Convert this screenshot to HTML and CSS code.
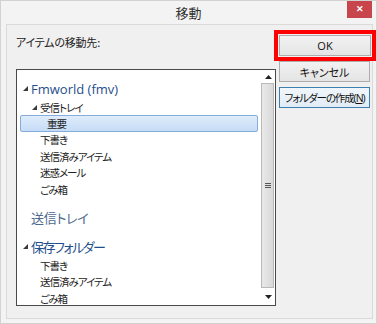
FILE: index.html
```html
<!DOCTYPE html>
<html lang="ja">
<head>
  <meta charset="UTF-8" />
  <title>移動</title>
  <link rel="stylesheet" href="styles.css">
</head>
<body>
  <div class="window">
    <div class="titlebar">
      <span class="title">移動</span>
      <button class="close">&#x2715;</button>
    </div>

    <div class="content">
      <div class="left">
        <div class="label">アイテムの移動先:</div>
        <div class="tree">
          <ul class="list">
            <li class="row big lv0"><span class="exp"><svg width="5" height="5"><polygon points="5,0 5,5 0,5" fill="#3a3a3a"/></svg></span><span class="acct">Fmworld (fmv)</span></li>
            <li class="row lv1"><span class="exp"><svg width="5" height="5"><polygon points="5,0 5,5 0,5" fill="#3a3a3a"/></svg></span>受信トレイ</li>
            <li class="row lv2 selected"><span class="exp"></span>重要</li>
            <li class="row lv1"><span class="exp"></span>下書き</li>
            <li class="row lv1"><span class="exp"></span>送信済みアイテム</li>
            <li class="row lv1"><span class="exp"></span>迷惑メール</li>
            <li class="row lv1"><span class="exp"></span>ごみ箱</li>
            <li class="row big lv0 outbox"><span class="exp"></span>送信トレイ</li>
            <li class="row big lv0 store"><span class="exp"><svg width="5" height="5"><polygon points="5,0 5,5 0,5" fill="#3a3a3a"/></svg></span>保存フォルダー</li>
            <li class="row lv1"><span class="exp"></span>下書き</li>
            <li class="row lv1"><span class="exp"></span>送信済みアイテム</li>
            <li class="row lv1"><span class="exp"></span>ごみ箱</li>
          </ul>
          <div class="scrollbar">
            <div class="arrow up"><svg width="7" height="4"><polygon points="3.5,0 7,4 0,4" fill="#222"/></svg></div>
            <div class="thumb"><svg width="6" height="5"><rect y="0" width="6" height="1" fill="#555"/><rect y="2" width="6" height="1" fill="#555"/><rect y="4" width="6" height="1" fill="#555"/></svg></div>
            <div class="arrow down"><svg width="7" height="4"><polygon points="0,0 7,0 3.5,4" fill="#222"/></svg></div>
          </div>
        </div>
      </div>

      <div class="buttons">
        <div class="btn ok">OK</div>
        <div class="btn">キャンセル</div>
        <div class="btn focus">フォルダーの作成(<u>N</u>)</div>
      </div>
    </div>
  </div>
</body>
</html>
```

FILE: styles.css
```css
* {
  box-sizing: border-box;
}

body {
  margin: 0;
  font-family: "Noto Sans CJK JP", "Open Sans", sans-serif;
  font-feature-settings: "palt";
  color: #1e1e1e;
}

.window {
  width: 377px;
  height: 324px;
  border: 1px solid #d2d2d2;
  background: #f3f3f3;
  display: flex;
  flex-direction: column;
}

.titlebar {
  height: 23px;
  display: grid;
  grid-template-columns: 1fr auto 1fr;
}

.title {
  grid-column: 2;
  font-size: 13px;
  line-height: 24px;
  color: #333;
}

.close {
  grid-column: 3;
  justify-self: end;
  margin: 0 4px 0 0;
  width: 25px;
  height: 17px;
  padding: 0;
  border: none;
  background: #c7454b;
  color: #fff;
  font-size: 9px;
  font-weight: bold;
  line-height: 17px;
}

.content {
  flex: 1;
  margin: 0 3px 4px 5px;
  border: 1px solid #dadada;
  background: #f0f0f0;
  padding: 10px 2px 0 9px;
  display: flex;
  gap: 3px;
}

.left {
  width: 260px;
}

.label {
  font-size: 11px;
  line-height: 14px;
  color: #222;
  letter-spacing: -0.2px;
}

.tree {
  margin-top: 20px;
  height: 237px;
  border: 1px solid #4a4a4a;
  background: #fff;
  display: flex;
}

.list {
  flex: 1;
  margin: 0;
  padding: 8px 0 0 3px;
  list-style: none;
  overflow: hidden;
}

.row {
  height: 16.4px;
  border: 1px solid transparent;
  border-radius: 2px;
  display: flex;
  align-items: center;
  font-size: 10.5px;
  letter-spacing: -1px;
  color: #222;
  white-space: nowrap;
}

.row.big {
  height: 21px;
  font-size: 13px;
  letter-spacing: -0.3px;
  color: #1f4f8c;
}

.row.outbox {
  margin-top: 10px;
  color: #4d6a8e;
}

.row.store {
  margin-top: 8px;
  letter-spacing: -1.5px;
}

.acct {
  font-family: "Open Sans", sans-serif;
  letter-spacing: 0;
}

.lv0 { padding-left: 2px; }
.lv1 { padding-left: 11px; }
.lv2 { padding-left: 18px; }

.exp {
  width: 8px;
  flex: none;
  display: flex;
  align-items: center;
}

.selected {
  background: linear-gradient(#dfecfb, #c6dcf6);
  border-color: #86acdc;
}

.scrollbar {
  width: 17px;
  display: flex;
  flex-direction: column;
  padding: 0 1px 0 3px;
}

.arrow {
  display: flex;
  justify-content: center;
}

.arrow.up {
  height: 13px;
  align-items: center;
  padding-left: 1px;
}

.arrow.down {
  height: 17px;
  align-items: center;
  padding-left: 1px;
}

.thumb {
  flex: 1;
  border: 1px solid #b9b9b9;
  background: linear-gradient(to right, #e9e9e9, #d9d9d9);
  display: flex;
  align-items: center;
  justify-content: center;
}

.buttons {
  width: 91px;
  display: flex;
  flex-direction: column;
  gap: 5px;
}

.btn {
  height: 21px;
  border: 1px solid #adadad;
  background: linear-gradient(#f2f2f2, #e4e4e4);
  font-family: "Open Sans", "Noto Sans CJK JP", sans-serif;
  font-size: 11px;
  color: #111;
  white-space: nowrap;
  display: flex;
  align-items: center;
  justify-content: center;
}

.btn.ok {
  width: 92px;
  outline: 4px solid #f00;
  outline-offset: 1px;
}

.btn.focus {
  border-color: #3c7fb1;
  background: linear-gradient(#f0f6fb, #e2ecf5);
  font-size: 10.5px;
  letter-spacing: -1.1px;
}
```
